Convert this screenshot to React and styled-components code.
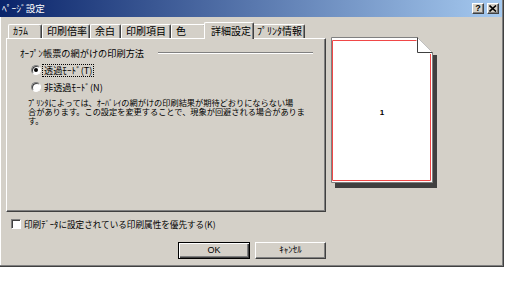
import React from 'react';
import styled, { createGlobalStyle } from 'styled-components';

const GlobalStyle = createGlobalStyle`
  body {
    margin: 0;
    background: #fff;
    font-family: "Noto Sans CJK JP", "Liberation Sans", sans-serif;
    color: #000;
  }
`;

const tabs = [
  { label: 'ｶﾗﾑ', width: 34 },
  { label: '印刷倍率', width: 48 },
  { label: '余白', width: 31 },
  { label: '印刷項目', width: 50 },
  { label: '色', width: 35 },
  { label: '詳細設定', width: 46, active: true },
  { label: 'ﾌﾟﾘﾝﾀ情報', width: 53 },
];

export default function App() {
  return (
    <>
      <GlobalStyle />
      <Dialog>
        <TitleBar>
          <Title>ﾍﾟｰｼﾞ設定</Title>
          <TitleButtons>
            <TitleButton>?</TitleButton>
            <TitleButton>
              <svg width="8" height="7" viewBox="0 0 8 7">
                <path d="M0.5 0.5 L7 6.5 M7 0.5 L0.5 6.5" stroke="#000" strokeWidth="1.6" />
              </svg>
            </TitleButton>
          </TitleButtons>
        </TitleBar>

        <Body>
          <LeftCol>
            <TabRow>
              {tabs.map(t => (
                <Tab key={t.label} $width={t.width} $active={t.active}>
                  {t.label}
                </Tab>
              ))}
            </TabRow>
            <Panel>
              <GroupHeader>
                <GroupLabel>ｵｰﾌﾟﾝ帳票の網がけの印刷方法</GroupLabel>
                <Etched />
              </GroupHeader>
              <RadioList>
                <RadioRow>
                  <Radio $checked />
                  <RadioLabel $focused>透過ﾓｰﾄﾞ(T)</RadioLabel>
                </RadioRow>
                <RadioRow>
                  <Radio />
                  <RadioLabel>非透過ﾓｰﾄﾞ(N)</RadioLabel>
                </RadioRow>
              </RadioList>
              <Note>
                <NoteLine>ﾌﾟﾘﾝﾀによっては、ｵｰﾊﾞﾚｲの網がけの印刷結果が期待どおりにならない場</NoteLine>
                <NoteLine>合があります。この設定を変更することで、現象が回避される場合がありま</NoteLine>
                <NoteLine>す。</NoteLine>
              </Note>
            </Panel>
            <CheckRow>
              <CheckBox />
              <CheckLabel>印刷ﾃﾞｰﾀに設定されている印刷属性を優先する(K)</CheckLabel>
            </CheckRow>
            <ButtonRow>
              <Button $default $width={72}>OK</Button>
              <Button $width={71}>ｷｬﾝｾﾙ</Button>
            </ButtonRow>
          </LeftCol>

          <Preview width="110" height="154" viewBox="0 0 110 154">
            <path d="M103 19 H108 V152 H6 V147 H103 Z" fill="#404040" />
            <path d="M2.5 1.5 H88.5 L103.5 16.5 V146.5 H2.5 Z" fill="#fff" stroke="#808080" />
            <path d="M88.5 1.5 V16.5 H103.5" fill="#fff" stroke="#404040" />
            <path d="M87.5 4.5 H3.5 V144.5 H101.5 V18" fill="none" stroke="#f04848" />
            <text x="53" y="79" fontSize="8" fontWeight="bold" textAnchor="middle" fontFamily="Liberation Sans, sans-serif">1</text>
          </Preview>
        </Body>
      </Dialog>
    </>
  );
}

const Dialog = styled.div`
  width: 504px;
  height: 267px;
  box-sizing: border-box;
  padding-right: 1px;
  background: #d4d0c8;
  border-right: 1px solid #404040;
  border-bottom: 1px solid #404040;
  box-shadow: inset -1px -1px 0 #808080, inset 1px 0 0 #fff;
  display: flex;
  flex-direction: column;
`;

const TitleBar = styled.div`
  height: 17px;
  display: flex;
  align-items: center;
  padding: 0 2px 0 2px;
  background: linear-gradient(to right, #0a246a, #a6caf0);
`;

const Title = styled.span`
  color: #fff;
  font-size: 9.5px;
  line-height: 11px;
`;

const TitleButtons = styled.div`
  margin-left: auto;
  display: flex;
  gap: 3px;
  margin-right: 1px;
`;

const TitleButton = styled.div`
  width: 12px;
  height: 11px;
  box-sizing: border-box;
  display: flex;
  align-items: center;
  justify-content: center;
  background: #d4d0c8;
  border: 1px solid;
  border-color: #fff #404040 #404040 #fff;
  box-shadow: inset -1px -1px 0 #808080;
  font-family: "Liberation Sans", sans-serif;
  font-weight: bold;
  font-size: 9px;
  line-height: 9px;
`;

const Body = styled.div`
  display: flex;
  align-items: flex-start;
  padding-top: 5px;
`;

const LeftCol = styled.div`
  margin-left: 6px;
  width: 320px;
  display: flex;
  flex-direction: column;
`;

const TabRow = styled.div`
  display: flex;
  align-items: flex-end;
  height: 16px;
  padding-left: 2px;
`;

const Tab = styled.div`
  position: relative;
  box-sizing: border-box;
  width: ${({ $width, $active }) => ($active ? $width + 4 : $width)}px;
  height: ${({ $active }) => ($active ? 17 : 14)}px;
  margin: ${({ $active }) => ($active ? '0 -2px -1px -2px' : '0')};
  z-index: ${({ $active }) => ($active ? 2 : 1)};
  padding-left: ${({ $active }) => ($active ? 6 : 4)}px;
  padding-top: ${({ $active }) => ($active ? 2 : 0)}px;
  background: #d4d0c8;
  border-top: 1px solid #fff;
  border-left: 1px solid #fff;
  border-right: 1px solid #404040;
  border-radius: 2px 2px 0 0;
  box-shadow: inset -1px 0 0 #808080;
  font-size: 10px;
  line-height: 12px;
  white-space: nowrap;
`;

const Panel = styled.div`
  position: relative;
  height: 174px;
  box-sizing: border-box;
  border: 1px solid;
  border-color: #fff #404040 #404040 #fff;
  box-shadow: inset -1px -1px 0 #808080;
  padding-top: 9px;
`;

const GroupHeader = styled.div`
  display: flex;
  align-items: center;
  height: 10px;
  padding: 0 12px 0 13px;
`;

const GroupLabel = styled.span`
  font-size: 9.2px;
  line-height: 10px;
  white-space: nowrap;
`;

const Etched = styled.div`
  flex: 1;
  margin-left: 14px;
  border-top: 1px solid #808080;
  border-bottom: 1px solid #fff;
`;

const RadioList = styled.div`
  display: flex;
  flex-direction: column;
  gap: 5px;
  margin-top: 6px;
  padding-left: 24px;
`;

const RadioRow = styled.div`
  display: flex;
  align-items: center;
  height: 12px;
`;

const Radio = styled.span`
  position: relative;
  width: 10px;
  height: 10px;
  box-sizing: border-box;
  border-radius: 50%;
  background: #fff;
  border: 1px solid;
  border-color: #808080 #fff #fff #808080;
  box-shadow: inset 1px 1px 0 #404040;
  &::after {
    content: '';
    display: ${({ $checked }) => ($checked ? 'block' : 'none')};
    position: absolute;
    left: 2px;
    top: 2px;
    width: 4px;
    height: 4px;
    border-radius: 50%;
    background: #000;
  }
`;

const RadioLabel = styled.span`
  margin-left: 2px;
  padding: 0 1px;
  font-size: 9.2px;
  line-height: 11px;
  outline: ${({ $focused }) => ($focused ? '1px dotted #000' : 'none')};
  white-space: nowrap;
`;

const Note = styled.div`
  margin: 5px 0 0 21px;
  font-size: 8.2px;
  line-height: 9px;
`;

const NoteLine = styled.div`
  white-space: nowrap;
`;

const CheckRow = styled.div`
  display: flex;
  align-items: center;
  margin-top: 7px;
  height: 10px;
  padding-left: 5px;
`;

const CheckBox = styled.span`
  width: 10px;
  height: 10px;
  box-sizing: border-box;
  background: #fff;
  border: 1px solid;
  border-color: #808080 #fff #fff #808080;
  box-shadow: inset 1px 1px 0 #404040;
`;

const CheckLabel = styled.span`
  margin-left: 3px;
  font-size: 8.6px;
  line-height: 10px;
  white-space: nowrap;
`;

const ButtonRow = styled.div`
  display: flex;
  justify-content: flex-end;
  gap: 5px;
  margin-top: 13px;
`;

const Button = styled.div`
  width: ${({ $width }) => $width}px;
  height: 17px;
  box-sizing: border-box;
  display: flex;
  align-items: center;
  justify-content: center;
  background: #d4d0c8;
  border: 1px solid;
  border-color: ${({ $default }) => ($default ? '#000' : '#fff #404040 #404040 #fff')};
  box-shadow: ${({ $default }) =>
    $default
      ? 'inset 1px 1px 0 #fff, inset -1px -1px 0 #404040, inset -2px -2px 0 #808080'
      : 'inset -1px -1px 0 #808080'};
  font-family: "Liberation Sans", "Noto Sans CJK JP", sans-serif;
  font-size: 9px;
  line-height: 11px;
`;

const Preview = styled.svg`
  margin: 14px 0 0 3px;
  flex-shrink: 0;
`;
